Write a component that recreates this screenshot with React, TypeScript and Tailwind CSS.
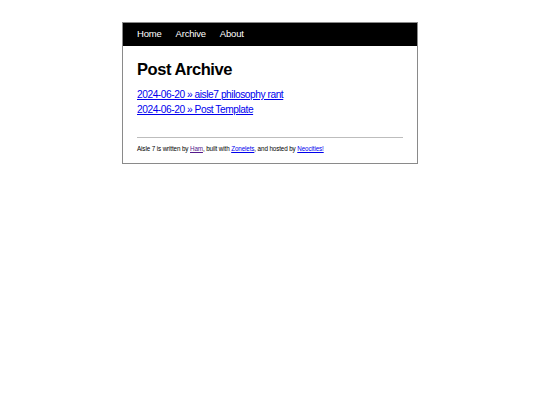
export default function App() {
  return (
    <div className="min-h-[405px] bg-white pt-[22px]" style={{ fontFamily: '"Liberation Sans", Arial, sans-serif' }}>
      <div className="ml-[122px] w-[296px] border border-[#8a8a8a] bg-white">
        <nav className="flex h-[23px] items-center gap-[14px] bg-black px-[14px] text-[9.5px] tracking-[-0.2px] text-white">
          <span>Home</span>
          <span>Archive</span>
          <span>About</span>
        </nav>
        <div className="px-[14px] pb-[10px]">
          <h1 className="mt-[13px] text-[16.5px] font-bold leading-[20px] tracking-[-0.45px] text-black">Post Archive</h1>
          <ul className="mt-[8px] text-[10.2px] leading-[15px] tracking-[-0.45px]">
            <li><a className="text-[#0000ee] underline" href="#">2024-06-20 » aisle7 philosophy rant</a></li>
            <li><a className="text-[#0000ee] underline" href="#">2024-06-20 » Post Template</a></li>
          </ul>
          <hr className="mt-[20px] border-t border-[#bdbdbd]" />
          <p className="mt-[6px] text-[6.3px] leading-[9px] tracking-[-0.12px] text-black">
            Aisle 7 is written by <a className="text-[#551a8b] underline" href="#">Ham</a>, built with{' '}
            <a className="text-[#0000ee] underline" href="#">Zonelets</a>, and hosted by{' '}
            <a className="text-[#0000ee] underline" href="#">Neocities!</a>
          </p>
        </div>
      </div>
    </div>
  )
}
